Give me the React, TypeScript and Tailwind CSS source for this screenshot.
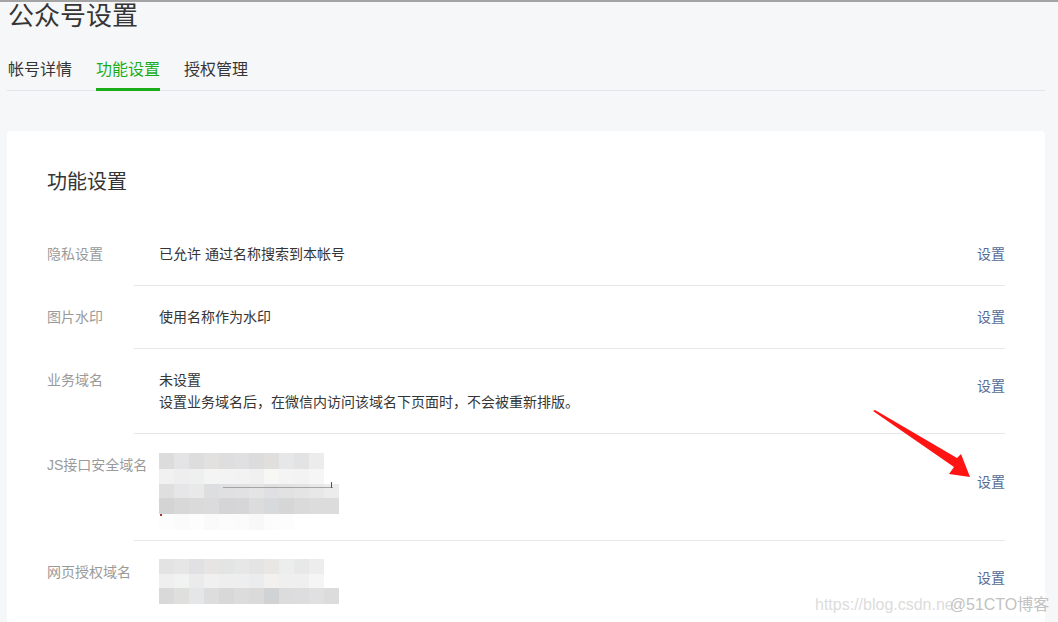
import React from 'react';

// 设置行
interface SettingRow {
  label: string;
  content: React.ReactNode;
  linkPad: string;
  bodyPad: string;
}

const ROW4_MOSAIC: { h: string; cells: string[] }[] = [
  { h: 'h-[16px]', cells: ['bg-[#dcdcdc]', 'bg-[#e4e4e6]', 'bg-[#dddddd]', 'bg-[#e2e1e0]', 'bg-[#dededf]', 'bg-[#e0e0e2]', 'bg-[#dcdcdd]', 'bg-[#e1dfde]', 'bg-[#e6e7e9]', 'bg-[#e3e3e3]', 'bg-[#ececec]'] },
  { h: 'h-[15px]', cells: ['bg-[#f1f1f1]', 'bg-[#eeeeee]', 'bg-[#eeefef]', 'bg-[#f4f4f4]', 'bg-[#f3f3f4]', 'bg-[#f2f2f3]', 'bg-[#f0f0f1]', 'bg-[#f7f7f6]', 'bg-[#f4f4f5]', 'bg-[#f3f3f3]', 'bg-[#f6f6f6]'] },
  { h: 'h-[14px]', cells: ['bg-[#dfdfdf]', 'bg-[#e6e6e8]', 'bg-[#e9e9e9]', 'bg-[#dddedf]', 'bg-[#e0e0e2]', 'bg-[#e1e1e3]', 'bg-[#e4e4e5]', 'bg-[#e0e0e2]', 'bg-[#e2e2e2]', 'bg-[#e4e4e4]', 'bg-[#e8e8e8]', 'bg-[#ececec]'] },
  { h: 'h-[16px]', cells: ['bg-[#d4d4d4]', 'bg-[#d8d8d8]', 'bg-[#dadada]', 'bg-[#dbdbdd]', 'bg-[#d5d5d7]', 'bg-[#d6d6d8]', 'bg-[#dcdcdc]', 'bg-[#d8d9db]', 'bg-[#d6d6d6]', 'bg-[#dadada]', 'bg-[#dcdcdc]', 'bg-[#dcdcdc]'] },
  { h: 'h-[16px]', cells: ['bg-[#fdfdfd]', 'bg-[#fbfbfb]', 'bg-[#fdfdfd]', 'bg-[#fafafa]', 'bg-[#fcfcfc]', 'bg-[#fbfbfb]', 'bg-[#f8f8f8]', 'bg-[#fcfcfc]', 'bg-[#fdfdfd]', 'bg-[#ffffff]', 'bg-[#ffffff]'] },
];

const ROW5_MOSAIC: { h: string; cells: string[] }[] = [
  { h: 'h-[15px]', cells: ['bg-[#e3e3e3]', 'bg-[#e6e6e6]', 'bg-[#e1e1e3]', 'bg-[#e6e5e4]', 'bg-[#e3e4e4]', 'bg-[#e7e7e8]', 'bg-[#e4e4e5]', 'bg-[#e8e7e6]', 'bg-[#eceeee]', 'bg-[#e8e8e8]', 'bg-[#ededed]'] },
  { h: 'h-[14px]', cells: ['bg-[#efefef]', 'bg-[#f1f2f2]', 'bg-[#ebebec]', 'bg-[#f0f0f0]', 'bg-[#eeeeef]', 'bg-[#eeeeef]', 'bg-[#ebecee]', 'bg-[#f2f1f0]', 'bg-[#efefef]', 'bg-[#efefef]', 'bg-[#f5f5f5]'] },
  { h: 'h-[16px]', cells: ['bg-[#d9d9d9]', 'bg-[#dfdfdd]', 'bg-[#e5e6e8]', 'bg-[#dddddd]', 'bg-[#d8d8d8]', 'bg-[#dcdcdc]', 'bg-[#dadada]', 'bg-[#d1d2d4]', 'bg-[#dcdcdc]', 'bg-[#dddde0]', 'bg-[#e0e0e0]', 'bg-[#dcdcdc]'] },
];

// 打码的域名
const Mosaic = ({ rows, withText }: { rows: { h: string; cells: string[] }[]; withText?: boolean }) => (
  <div className="relative w-[180px]">
    {rows.map((r, i) => (
      <div key={i} className={`flex ${r.h}`}>
        {r.cells.map((c, j) => (
          <div key={j} className={`w-[15px] shrink-0 ${c}`} />
        ))}
      </div>
    ))}
    {withText && (
      <>
        <div className="absolute left-[64px] top-[34px] h-px w-[110px] bg-[#8a8a8a] opacity-70" />
        <div className="absolute left-[172px] top-[29px] h-[6px] w-px bg-[#555]" />
        <div className="absolute left-[1px] top-[61px] h-[2px] w-[2px] bg-[#a33]" />
      </>
    )}
  </div>
);

const rows: SettingRow[] = [
  {
    label: '隐私设置',
    content: <p>已允许 通过名称搜索到本帐号</p>,
    linkPad: 'pt-[20px]',
    bodyPad: 'pt-[20px] pb-[20px]',
  },
  {
    label: '图片水印',
    content: <p>使用名称作为水印</p>,
    linkPad: 'pt-[20px]',
    bodyPad: 'pt-[20px] pb-[20px]',
  },
  {
    label: '业务域名',
    content: (
      <>
        <p>未设置</p>
        <p>设置业务域名后，在微信内访问该域名下页面时，不会被重新排版。</p>
      </>
    ),
    linkPad: 'pt-[26px]',
    bodyPad: 'pt-[20px] pb-[20px]',
  },
  {
    label: 'JS接口安全域名',
    content: <Mosaic rows={ROW4_MOSAIC} withText />,
    linkPad: 'pt-[37px]',
    bodyPad: 'pt-[19px] pb-[10px]',
  },
  {
    label: '网页授权域名',
    content: <Mosaic rows={ROW5_MOSAIC} />,
    linkPad: 'pt-[26px]',
    bodyPad: 'pt-[18px] pb-[20px]',
  },
];

export default function App() {
  return (
    <div className="relative h-[622px] overflow-hidden border-t-2 border-[#a4a4a4] bg-[#f6f7f9] pl-[7px] pr-[13px] font-['Liberation_Sans','Noto_Sans_CJK_SC',sans-serif] text-[#353535]">
      {/* 页头 */}
      <h1 className="mt-px pl-px text-[26px] leading-[26px] font-normal text-[#353535]">公众号设置</h1>

      {/* 标签 */}
      <nav className="mt-[23px] flex gap-6 border-b border-[#e4e5e8] pl-px text-[16px]">
        <span className="-mb-px border-b-[3px] border-transparent leading-[36px]">帐号详情</span>
        <span className="-mb-px border-b-[3px] border-[#1aad19] leading-[36px] text-[#1aad19]">功能设置</span>
        <span className="-mb-px border-b-[3px] border-transparent leading-[36px]">授权管理</span>
      </nav>

      {/* 卡片 */}
      <div className="mt-10 rounded bg-white pl-10 pr-10 pt-[37px]">
        <h2 className="text-[20px] leading-[28px] font-normal">功能设置</h2>
        <div className="mt-[27px]">
          {rows.map((row) => (
            <div key={row.label} className="flex text-[14px] leading-[22px]">
              <div className="w-[87px] shrink-0 pt-[20px] text-[#9a9a9a] whitespace-nowrap">{row.label}</div>
              <div className="flex flex-1 justify-between border-b border-[#e7e7eb] pl-[25px]">
                <div className={row.bodyPad}>{row.content}</div>
                <div className={row.linkPad}>
                  <a className="text-[#576b95]">设置</a>
                </div>
              </div>
            </div>
          ))}
        </div>
      </div>

      {/* 红色箭头 */}
      <svg className="absolute left-[868px] top-[402px]" width="110" height="80" viewBox="0 0 110 80">
        <polygon
          points="5,7 7,6 89,54 93,50 102,73 81,70 86,63"
          fill="#ff1414"
        />
      </svg>

      {/* 水印 */}
      <div className="absolute left-[815px] top-[592px] flex items-baseline text-[16px] leading-[22px]">
        <span className="text-[#dcdcdc]">https://blog.csdn.ne</span>
        <span className="-ml-[4px] text-[#c2c2c2]">@51CTO博客</span>
      </div>
    </div>
  );
}
